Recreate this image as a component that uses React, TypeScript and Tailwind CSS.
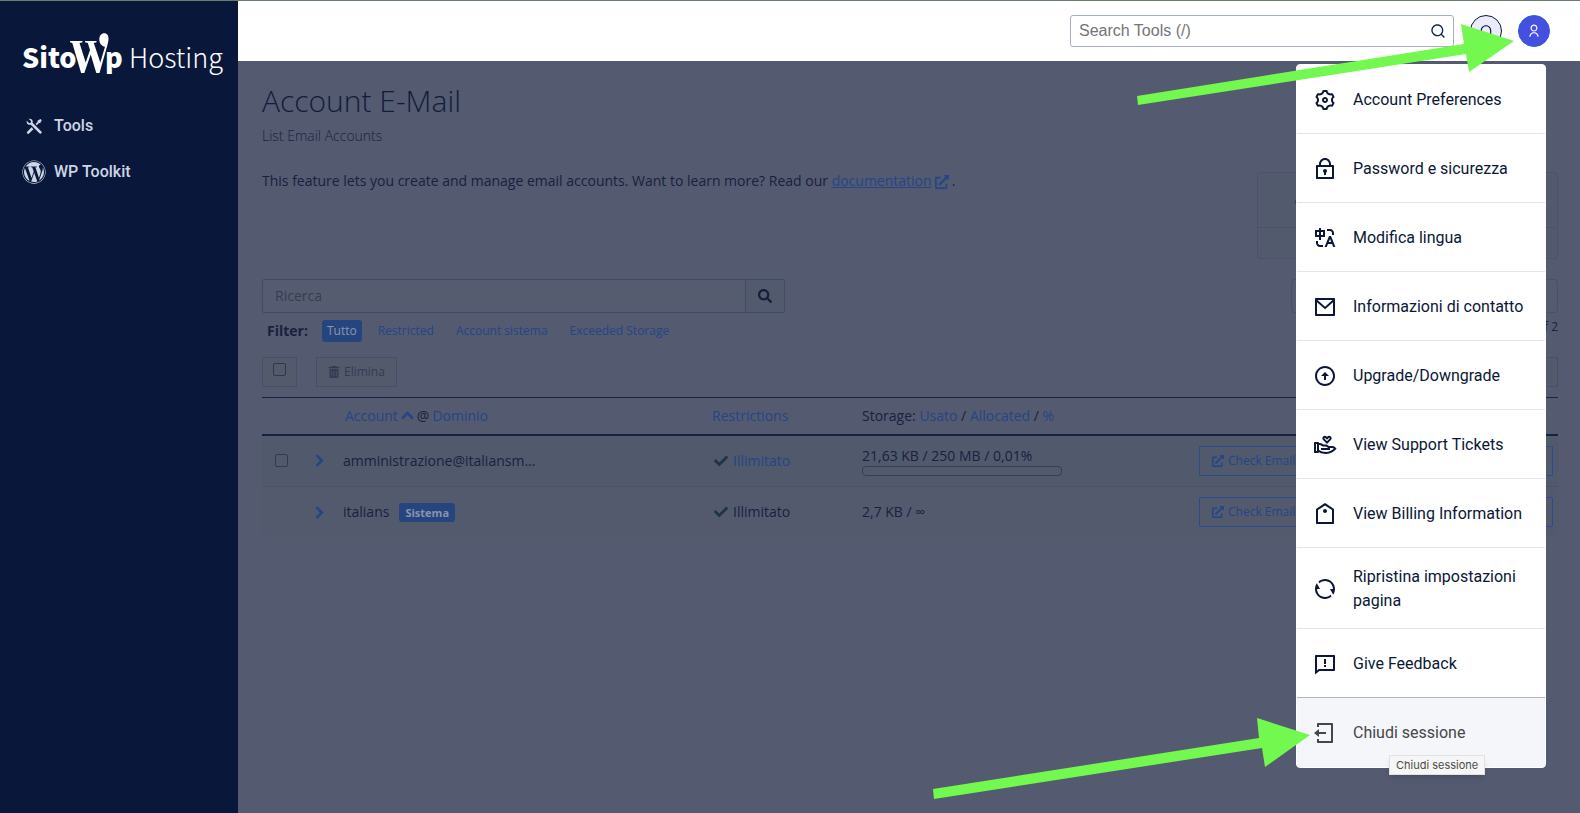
import React from "react";
import {
  RiFeedbackLine,
  RiHandHeartLine,
  RiLock2Line,
  RiLogoutBoxLine,
  RiMailLine,
  RiNotificationLine,
  RiPriceTagLine,
  RiRefreshLine,
  RiSearchLine,
  RiSettings3Line,
  RiToolsFill,
  RiTranslate,
  RiUserLine,
} from "react-icons/ri";
import { FaCheck, FaExternalLinkAlt, FaSearch, FaTrashAlt, FaWordpress } from "react-icons/fa";

type IconProps = { size?: number; className?: string };

function UpgradeIcon({ size = 24, className }: IconProps) {
  return (
    <svg viewBox="0 0 24 24" width={size} height={size} className={className} fill="currentColor" aria-hidden="true">
      <path d="M12 2c5.520 0 10 4.480 10 10s-4.480 10-10 10S2 17.520 2 12 6.480 2 12 2zm0 18c4.420 0 8-3.580 8-8s-3.580-8-8-8-8 3.580-8 8 3.580 8 8 8zm1-8v4h-2v-4H8l4-4 4 4h-3z" />
    </svg>
  );
}

function ChevronRight() {
  return (
    <svg viewBox="0 0 9 13" width={9} height={13} fill="none" stroke="currentColor" strokeWidth="2.6" aria-hidden="true">
      <path d="M1.500 1.200 6.800 6.500 1.500 11.800" />
    </svg>
  );
}

function ChevronUp() {
  return (
    <svg viewBox="0 0 13 9" width={13} height={9} fill="none" stroke="currentColor" strokeWidth="2.6" aria-hidden="true">
      <path d="M1.200 7.500 6.500 2.200 11.800 7.500" />
    </svg>
  );
}

const menuItems: { label: string; Icon: React.ComponentType<IconProps> }[] = [
  { label: "Account Preferences", Icon: RiSettings3Line },
  { label: "Password e sicurezza", Icon: RiLock2Line },
  { label: "Modifica lingua", Icon: RiTranslate },
  { label: "Informazioni di contatto", Icon: RiMailLine },
  { label: "Upgrade/Downgrade", Icon: UpgradeIcon },
  { label: "View Support Tickets", Icon: RiHandHeartLine },
  { label: "View Billing Information", Icon: RiPriceTagLine },
  { label: "Ripristina impostazioni pagina", Icon: RiRefreshLine },
  { label: "Give Feedback", Icon: RiFeedbackLine },
];

function Logo() {
  return (
    <a href="#home" aria-label="SitoWp Hosting" className="flex h-12 items-center pl-[22px] text-white">
      <svg viewBox="0 0 210 48" className="h-12 w-[210px] shrink-0">
        <g fill="#fff" fontFamily='"Noto Sans CJK JP", "Noto Sans", sans-serif'>
          <text x="0" y="37" fontSize="27" fontWeight="900">Sito</text>
          <text x="83" y="37" fontSize="27" fontWeight="900">p</text>
          <text x="107" y="37" fontSize="27" fontWeight="300">Hosting</text>
        </g>
        <path
          fill="#fff"
          d="M48 10h12.500v1.300l-3 .7 6.200 19.500 4.300-12.500-2.200-7-2.800-.7V10h11.500v1.300l-2.700.7 6.500 19.500 4.700-15.700c-3.700-.8-5.700-3.600-5.700-7.300C77.300 4.600 79.300 2.200 82.300 2.200c2.900 0 4.500 2.500 4.200 6.100-.2 3-1.100 6.200-2.200 9.700L77.500 42h-3.200l-5.600-18.500L62.300 42h-3.200L50.300 12 48 11.300z"
        />
      </svg>
    </a>
  );
}

function Sidebar() {
  return (
    <aside className="w-[238px] shrink-0 bg-[#09183a] pt-[30px]">
      <Logo />
      <nav className="mt-6 flex flex-col px-[22px] font-['Roboto',sans-serif] text-base font-medium text-[#cfd5e4]">
        <a href="#tools" className="flex h-[46px] items-center gap-2">
          <span className="flex w-6 justify-center">
            <RiToolsFill size={21} />
          </span>
          Tools
        </a>
        <a href="#wp-toolkit" className="flex h-[46px] items-center gap-2">
          <FaWordpress size={24} />
          WP Toolkit
        </a>
      </nav>
    </aside>
  );
}

function Header() {
  return (
    <header className="flex h-[60px] items-center justify-end gap-4 bg-white pr-[30px]">
      <label className="flex h-8 w-96 items-center rounded-[3px] border border-[#a9b0bd] bg-white pr-[7px] pl-2">
        <input
          type="text"
          aria-label="Search Tools"
          placeholder="Search Tools (/)"
          className="min-w-0 flex-1 bg-transparent font-['Liberation_Sans',sans-serif] text-base text-[#333] outline-none placeholder:text-[#757575]"
        />
        <RiSearchLine size={16} className="text-[#0e2250]" />
      </label>
      <button
        type="button"
        aria-label="Notifications"
        className="flex size-8 items-center justify-center rounded-full border border-[#09183a] bg-[#ebebfb] text-[#09183a]"
      >
        <RiNotificationLine size={14} />
      </button>
      <button
        type="button"
        aria-label="User menu"
        className="flex size-8 items-center justify-center rounded-full border border-[#2f5fd0] bg-[#4350e0] text-white"
      >
        <RiUserLine size={14} />
      </button>
    </header>
  );
}

function AccountMenu() {
  return (
    <div className="absolute top-[63px] right-[34px] w-[250px]">
      <ul className="rounded border border-white bg-white font-['Roboto',sans-serif] text-base leading-6 text-[#0a1736]">
        {menuItems.map(({ label, Icon }) => (
          <li key={label} className="border-b border-[#e2e6ea]">
            <a href="#menu" className="flex min-h-[68px] items-center gap-4 px-4 pt-[17px] pb-[15px]">
              <Icon size={24} className="shrink-0" />
              <span>{label}</span>
            </a>
          </li>
        ))}
        <li className="-mt-px rounded-b-[3px] border-t border-[#b0b6be] bg-[#f4f6f9] text-[#454649]">
          <a href="#logout" className="flex min-h-[69px] items-center gap-4 px-4">
            <RiLogoutBoxLine size={24} className="shrink-0" />
            <span>Chiudi sessione</span>
          </a>
        </li>
      </ul>
      <div
        role="tooltip"
        className="absolute top-[691px] left-[93px] flex h-5 items-center border border-[#e2e2e2] bg-[#f6f6f6] px-[6px] font-['Inter',sans-serif] text-[11px] whitespace-nowrap text-[#4b4b4b] shadow-md"
      >
        Chiudi sessione
      </div>
      <svg
        aria-hidden="true"
        viewBox="0 0 378 84"
        className="pointer-events-none absolute -top-[42px] -left-[160px] h-[84px] w-[378px]"
      >
        <path fill="#72f84e" d="M1 74 328 22 325 2 378 19 333 50 330 32 2 83z" />
      </svg>
      <svg
        aria-hidden="true"
        viewBox="0 0 378 84"
        className="pointer-events-none absolute top-[652px] -left-[364px] h-[84px] w-[378px]"
      >
        <path fill="#72f84e" d="M1 73 327 22 325 2 378 19 333 51 330 32 2 83z" />
      </svg>
    </div>
  );
}

function CheckEmailButton() {
  return (
    <button
      type="button"
      className="flex h-[30px] w-full items-center gap-1 rounded-[1px] border border-[#2b4b8b] px-3 text-xs text-[#244587]"
    >
      <FaExternalLinkAlt size={12} />
      Check Email
    </button>
  );
}

const link = "text-[#244587]";

function AccountsTable() {
  return (
    <table className="mt-[10px] w-full table-fixed border-collapse text-left text-sm">
      <colgroup>
        <col className="w-[45px]" />
        <col className="w-[28px]" />
        <col className="w-[369px]" />
        <col className="w-[150px]" />
        <col className="w-[336px]" />
        <col />
      </colgroup>
      <thead>
        <tr className="h-[37px] border-t border-b-2 border-t-[#1a2442] border-b-[#18223f]">
          <th aria-label="Select" />
          <th aria-label="Expand" />
          <th className="px-2 font-normal">
            <span className="flex items-center gap-[3px] pl-[2px]">
              <a href="#account" className={link}>Account</a>
              <span className={link}>
                <ChevronUp />
              </span>
              <span>@</span>
              <a href="#dominio" className={link}>Dominio</a>
            </span>
          </th>
          <th className="px-2 font-normal">
            <a href="#restrictions" className={link}>Restrictions</a>
          </th>
          <th className="px-2 font-normal">
            Storage: <a href="#usato" className={link}>Usato</a> / <a href="#allocated" className={link}>Allocated</a> /{" "}
            <a href="#percent" className={link}>%</a>
          </th>
          <th aria-label="Actions" />
        </tr>
      </thead>
      <tbody>
        <tr className="h-[52px] border-b border-[#4b5268] bg-[#51596c]">
          <td className="pl-[13px]">
            <input
              type="checkbox"
              aria-label="Select amministrazione"
              className="block size-[13px] appearance-none rounded-[2px] border border-[#303a55]"
            />
          </td>
          <td className="pl-2">
            <button type="button" aria-label="Expand amministrazione" className="flex text-[#244587]">
              <ChevronRight />
            </button>
          </td>
          <td className="px-2">amministrazione@italiansm...</td>
          <td className="px-2">
            <span className="flex items-center gap-[5px] pl-[2px]">
              <FaCheck size={14} className="text-[#1f3547]" />
              <a href="#illimitato" className={link}>Illimitato</a>
            </span>
          </td>
          <td className="px-2">
            <div className="leading-5">21,63 KB / 250 MB / 0,01%</div>
            <div className="h-[10px] w-[200px] rounded border border-[#353e57]" />
          </td>
          <td className="pr-[5px] pl-[9px]">
            <CheckEmailButton />
          </td>
        </tr>
        <tr className="h-[51px] bg-[#535a6e]">
          <td />
          <td className="pl-2">
            <button type="button" aria-label="Expand italians" className="flex text-[#244587]">
              <ChevronRight />
            </button>
          </td>
          <td className="px-2">
            <span className="flex items-center gap-[10px]">
              italians
              <span className="rounded-[3px] bg-[#26457f] px-[6px] text-[11px] leading-[19px] font-bold text-[#8b94aa]">
                Sistema
              </span>
            </span>
          </td>
          <td className="px-2">
            <span className="flex items-center gap-[5px] pl-[2px]">
              <FaCheck size={14} className="text-[#1f3547]" />
              Illimitato
            </span>
          </td>
          <td className="px-2">2,7 KB / ∞</td>
          <td className="pr-[5px] pl-[9px]">
            <CheckEmailButton />
          </td>
        </tr>
      </tbody>
    </table>
  );
}

function Content() {
  return (
    <main className="flex-1 bg-[#545a70] pr-[22px] pl-6 font-['Open_Sans',sans-serif] text-sm text-[#18213f]">
      <h1 className="pt-5 text-[30px] leading-10 font-light text-[#121c3d]">Account E-Mail</h1>
      <p className="mt-[5px] leading-5 font-light text-[#1a2340]">List Email Accounts</p>
      <div className="mt-[25px] flex h-[108px] justify-between">
        <p className="leading-5">
          This feature lets you create and manage email accounts. Want to learn more? Read our{" "}
          <a href="#documentation" className="text-[#244587] underline">documentation</a>
          <FaExternalLinkAlt size={14} className="mx-[3px] inline text-[#244587]" />.
        </p>
        <div className="mt-px h-[87px] w-[301px] rounded border border-[#4c5369] bg-[#525a6e]">
          <div className="h-[55px] border-b border-[#4c5369] pt-3 pl-9 text-2xl">∞</div>
        </div>
      </div>

      <div className="flex justify-between">
        <form className="flex h-[34px] w-[523px] rounded-[2px] border border-[#434b61] bg-[#565c70]">
          <input
            type="search"
            aria-label="Ricerca"
            placeholder="Ricerca"
            className="min-w-0 flex-1 bg-transparent px-3 text-sm outline-none placeholder:text-[#343c55]"
          />
          <button
            type="button"
            aria-label="Cerca"
            className="flex w-[39px] items-center justify-center border-l border-[#434b61] bg-[#525a6e] text-[#151f3b]"
          >
            <FaSearch size={14} />
          </button>
        </form>
        <div className="h-[34px] w-[267px] rounded border border-[#4a5167]" />
      </div>

      <div className="mt-[7px] flex h-[22px] items-center text-xs">
        <span className="mr-[14px] pl-[5px] text-sm font-bold">Filter:</span>
        <button type="button" className="h-[22px] rounded-[3px] bg-[#26457f] px-[5px] text-[#8b95ad]">Tutto</button>
        <a href="#restricted" className="ml-4 text-[#244587]">Restricted</a>
        <a href="#system" className="ml-[22px] text-[#244587]">Account sistema</a>
        <a href="#exceeded" className="ml-[22px] text-[#244587]">Exceeded Storage</a>
        <span className="ml-auto pb-2">1 - 2 of 2</span>
      </div>

      <div className="mt-[15px] flex h-[30px] items-stretch text-xs text-[#333b52]">
        <label className="flex w-[35px] justify-center border border-[#465068] bg-[#525a6c] pt-[5px]">
          <input
            type="checkbox"
            aria-label="Select all"
            className="size-[13px] appearance-none rounded-[2px] border border-[#2e3751]"
          />
        </label>
        <button type="button" className="ml-[19px] flex items-center gap-1 border border-[#465068] bg-[#525a6c] px-[11px]">
          <FaTrashAlt size={12} />
          Elimina
        </button>
        <button type="button" aria-label="Settings" className="ml-auto w-10 border border-[#465068] bg-[#525a6c]" />
      </div>

      <AccountsTable />
    </main>
  );
}

export default function App() {
  return (
    <div className="relative flex min-h-screen flex-col border-t border-[#6b7c6b]">
      <div className="flex flex-1">
        <Sidebar />
        <div className="flex min-w-0 flex-1 flex-col">
          <Header />
          <Content />
        </div>
      </div>
      <AccountMenu />
    </div>
  );
}
